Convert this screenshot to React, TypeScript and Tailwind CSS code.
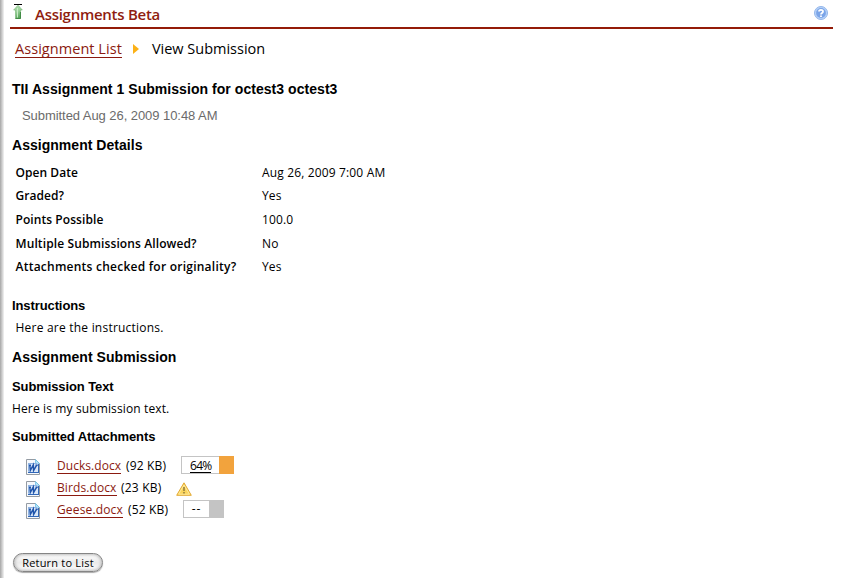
import React from 'react';

const Arrow = () => (
  <svg width="10" height="17" viewBox="0 0 10 17" className="block">
    <defs>
      <linearGradient id="green" x1="0" y1="0" x2="0.4" y2="1">
        <stop offset="0" stopColor="#b5e0b3" />
        <stop offset="0.5" stopColor="#9fd49d" />
        <stop offset="1" stopColor="#5aa65d" />
      </linearGradient>
    </defs>
    <path d="M1 .5h8" stroke="#000" />
    <path d="M5 1.2 9.300 6H7.500v8.500h-5V6H.7Z" fill="url(#green)" stroke="#7cb97d" strokeWidth=".7" />
    <path d="M7.500 8v6.500h-5" fill="none" stroke="#2f7d34" strokeWidth=".8" />
    <path d="M4.500 4v9.500" stroke="#c7eac5" />
  </svg>
);

const Help = () => (
  <svg width="14" height="14" viewBox="0 0 14 14" className="block">
    <circle cx="7" cy="7" r="6.500" fill="#b9d3f8" stroke="#93b6ea" />
    <circle cx="7" cy="7" r="4.900" fill="#7ba5e8" />
    <path d="M5 5.600C5 3.300 9 3.300 9 5.500 9 7 7 6.800 7 8.500M7 9.600v1.300" fill="none" stroke="#fff" strokeWidth="1.800" />
  </svg>
);

const Word = () => (
  <svg width="14" height="16" viewBox="0 0 14 16" className="relative top-px block">
    <path d="M.5.5h9l4 4v11H.5Z" fill="#f6f9fd" stroke="#949ba3" />
    <path d="M9.500.5v4h4Z" fill="#b4e2f6" stroke="#6fc0e6" strokeWidth=".8" />
    <path d="M2 4.500h10.500v8.500H2Z" fill="#d9e8fa" />
    <path d="M2 4.500h9M2.500 4.500v8" stroke="#8fb3e2" />
    <path d="M2 13.500h11M12.500 5v8.500" fill="none" stroke="#3268b8" />
    <path d="M3.800 5.800 4.300 11.500 7.300 6 7.600 11.500 10.800 5.800M3 6.300h2M9.500 6.300h2.200" fill="none" stroke="#2055ab" strokeWidth="1.500" />
  </svg>
);

const Warning = () => (
  <svg width="16" height="14" viewBox="0 0 16 14" className="relative left-px top-px block">
    <path d="M8 .8 15.3 13.3H.7Z" fill="#fad45c" stroke="#e2a936" strokeLinejoin="round" />
    <path d="M8 3 13.4 12.2H2.6Z" fill="none" stroke="#fff0ae" strokeWidth=".8" />
    <path d="M8 5v4M8 10v1.400" stroke="#8f7a3c" strokeWidth="1.500" />
  </svg>
);

const details = [
  { label: 'Open Date', value: 'Aug 26, 2009 7:00 AM', row: 'h-[23px]', fit: 'tracking-[0.05px]' },
  { label: 'Graded?', value: 'Yes', row: 'h-[24px]', fit: 'tracking-[0.05px]' },
  { label: 'Points Possible', value: '100.0', row: 'h-[24px]', fit: 'tracking-[0.07px]' },
  { label: 'Multiple Submissions Allowed?', value: 'No', row: 'h-[23px]', fit: 'tracking-[0.11px]' },
  { label: 'Attachments checked for originality?', value: 'Yes', row: 'h-[23px]', fit: 'tracking-[0.24px]' },
];

const link = 'border-b border-[#8b1a10] text-[#8b1a10]';

export default function App() {
  return (
    <div className="flex h-[578px] w-[857px] overflow-hidden bg-white font-['Open_Sans',sans-serif] text-[12px] leading-[20px] text-black">
      <div className="w-[4px] shrink-0 bg-linear-to-r from-[#a6a6a6] to-[#f4f4f4]" />
      <div className="flex w-[829px] flex-col pl-[6px]">
        <header className="flex h-[29px] shrink-0 border-b-2 border-[#941b08] pl-[3px]">
          <div className="pt-[4px]"><Arrow /></div>
          <h1 className="ml-[12px] mt-[4px] text-[15px] font-semibold tracking-[-0.27px] text-[#8f1d10]">Assignments Beta</h1>
          <div className="ml-auto mr-[5px] mt-[6px]"><Help /></div>
        </header>
        <nav className="mt-[10px] flex h-[20px] shrink-0 items-center pl-[5px] text-[14.5px]">
          <a className="h-[18px] border-b border-[#8b1a10] leading-[18px] tracking-[0.05px] text-[#8b1a10]">Assignment List</a>
          <svg width="6" height="10" viewBox="0 0 6 10" className="ml-[11px]"><path d="M0 0 6 5 0 10Z" fill="#fbb117" /></svg>
          <span className="ml-[13px]">View Submission</span>
        </nav>
        <main className="flex flex-col items-start pl-[2px]">
          <h2 className="mt-[20px] h-[20px] font-['Liberation_Sans',sans-serif] text-[14px] font-bold tracking-[0.05px]">TII Assignment 1 Submission for octest3 octest3</h2>
          <p className="ml-[10px] mt-[7px] h-[20px] font-['Liberation_Sans',sans-serif] text-[13px] tracking-[-0.06px] text-[#6b6b6b]">Submitted Aug 26, 2009 10:48 AM</p>
          <h2 className="mt-[9px] h-[20px] font-['Liberation_Sans',sans-serif] text-[14px] font-bold tracking-[0.03px]">Assignment Details</h2>
          <dl className="mt-[8px] pl-[3.5px]">
            {details.map((d) => (
              <div key={d.label} className={`flex ${d.row}`}>
                <dt className={`w-[246.5px] font-semibold ${d.fit}`}>{d.label}</dt>
                <dd className="tracking-[0.15px]">{d.value}</dd>
              </div>
            ))}
          </dl>
          <h3 className="mt-[16px] h-[20px] font-['Liberation_Sans',sans-serif] text-[13px] font-bold tracking-[-0.1px]">Instructions</h3>
          <p className="ml-[3.5px] mt-[2px] h-[20px] tracking-[0.22px]">Here are the instructions.</p>
          <h2 className="mt-[9px] h-[20px] font-['Liberation_Sans',sans-serif] text-[14px] font-bold tracking-[0.05px]">Assignment Submission</h2>
          <h3 className="mt-[10px] h-[20px] font-['Liberation_Sans',sans-serif] text-[13px] font-bold tracking-[-0.1px]">Submission Text</h3>
          <p className="mt-[2px] h-[20px] tracking-[0.13px]">Here is my submission text.</p>
          <h3 className="mt-[8px] h-[20px] font-['Liberation_Sans',sans-serif] text-[13px] font-bold tracking-[-0.1px]">Submitted Attachments</h3>
          <ul className="mt-[8px] flex flex-col pl-[14px]">
            <li className="flex h-[22px] items-center">
              <Word />
              <a className={`ml-[17px] h-[15px] w-[64px] leading-[14px] tracking-[0.05px] ${link}`}>Ducks.docx</a>
              <span className="ml-[5px] w-[55px] whitespace-nowrap tracking-[0.15px]">(92 KB)</span>
              <span className="mb-[2px] flex h-[18px] w-[53px] border border-[#c4c4c4]">
                <span className="flex w-[37px] justify-center"><b className="mt-[1px] h-[15px] w-[21px] border-b border-black font-normal leading-[15px] tracking-[-0.7px]">64%</b></span>
                <i className="-my-px -mr-px w-[15px] bg-[#f2a33d]" />
              </span>
            </li>
            <li className="flex h-[22px] items-center">
              <Word />
              <a className={`ml-[17px] h-[15px] w-[60px] leading-[14px] tracking-[0.1px] ${link}`}>Birds.docx</a>
              <span className="ml-[4px] w-[54px] whitespace-nowrap tracking-[0.2px]">(23 KB)</span>
              <Warning />
            </li>
            <li className="flex h-[22px] items-center">
              <Word />
              <a className={`ml-[17px] h-[15px] w-[66px] leading-[14px] tracking-[0.15px] ${link}`}>Geese.docx</a>
              <span className="ml-[5px] w-[55px] whitespace-nowrap tracking-[0.15px]">(52 KB)</span>
              <span className="mb-[2px] flex h-[18px] w-[41px] border border-[#c4c4c4]">
                <span className="w-[25px] text-center leading-[16px] tracking-[0.8px]">--</span>
                <i className="w-[14px] bg-[#c4c4c4]" />
              </span>
            </li>
          </ul>
          <button className="ml-[1px] mt-[32px] h-[19px] w-[90px] rounded-full border border-[#858585] bg-linear-to-b from-white via-[#ebebeb] to-white text-[11px] leading-[16px] tracking-[0.2px] shadow-[0_1px_1px_#aaa,inset_0_0_3px_1px_#bbb]">Return to List</button>
        </main>
      </div>
    </div>
  );
}
